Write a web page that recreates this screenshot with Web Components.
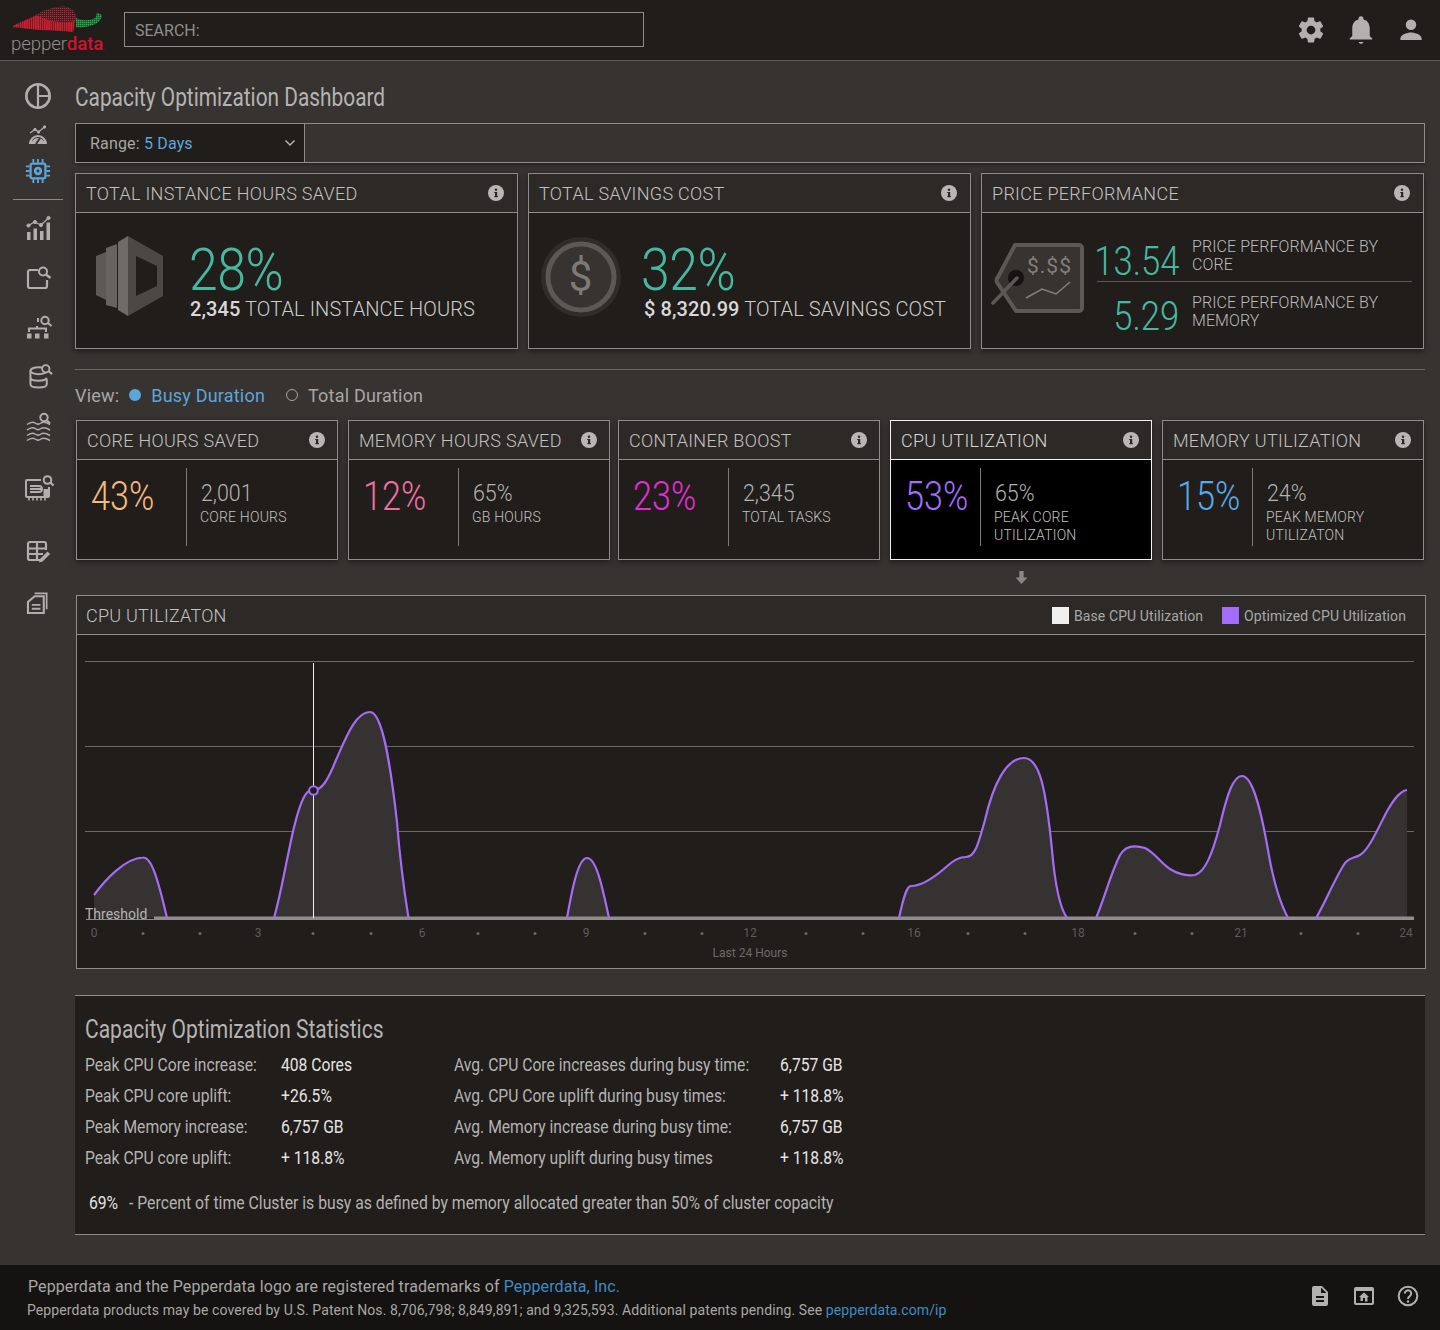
<!DOCTYPE html>
<html><head><meta charset="utf-8"><style>
html,body{margin:0;padding:0;background:#363331;}
body{width:1440px;height:1330px;overflow:hidden;font-family:Roboto,"Liberation Sans",sans-serif;color:#b5b3b1}
</style></head><body>
<pd-app></pd-app>
<script>
const INFO=`<svg width="16" height="16" viewBox="0 0 16 16"><circle cx="8" cy="8" r="8" fill="#b9b7b5"/><rect x="7" y="7" width="2.2" height="5" fill="#2b2826"/><rect x="6.2" y="7" width="2" height="1" fill="#2b2826"/><rect x="6.2" y="11.2" width="3.8" height="1" fill="#2b2826"/><circle cx="8" cy="4.8" r="1.2" fill="#2b2826"/></svg>`;
function el(name,html,css,after){customElements.define(name,class extends HTMLElement{connectedCallback(){if(this.shadowRoot)return;const r=this.attachShadow({mode:'open'});r.innerHTML='<style>'+css+'</style>'+(typeof html==='function'?html(this):html);after&&after(r,this)}})}

el('pd-topbar',`
<svg class="logo" width="106" height="34" viewBox="0 0 106 34"><defs>
<pattern id="s" width="2.200" height="3" patternUnits="userSpaceOnUse"><rect width="1.500" height="3" fill="#d21f30"/><rect x="1.500" width=".7" height="3" fill="#5a1d22"/></pattern>
<pattern id="d" width="2" height="2" patternUnits="userSpaceOnUse"><rect width="2" height="2" fill="#2a1d1d"/><rect width="1.200" height="1.200" fill="#c8273a"/></pattern>
<pattern id="g" width="2" height="2" patternUnits="userSpaceOnUse"><rect width="2" height="2" fill="#123b1d"/><rect width="1.500" height="1.500" fill="#28b04c"/></pattern></defs>
<path d="M13 26C22 21 32 18 40 13C48 9 58 6 66 7C72 8 76 12 75.500 18C75 24 74 29 73 32C62 31 52 30 40 30C30 29 20 28 13 27z" fill="url(#s)"/>
<path d="M36 15C44 10 56 6 66 7C72 8 76 12 75.500 21C62 24 48 21 36 15z" fill="url(#d)"/>
<path d="M76 18C82 21 90 21 95 18C97 17 96 14 97 12.500L102 15C102 20 97 24 90 26C86 27 80 28 76 27z" fill="url(#g)"/></svg>
<div class="brand"><span>pepper</span><b>data</b><i>.</i></div>
<div class="search">SEARCH:</div>
<div class="icons">
<svg width="30" height="30" viewBox="0 0 24 24" fill="#b3b1af"><path d="M19.4 13c.04-.33.06-.66.06-1s-.02-.67-.06-1l2.1-1.65c.2-.15.25-.42.12-.64l-2-3.46c-.12-.22-.38-.3-.6-.22l-2.5 1c-.52-.4-1.08-.73-1.7-.98l-.37-2.65A.49.49 0 0 0 14 2h-4c-.25 0-.46.18-.5.42l-.37 2.65c-.62.25-1.18.58-1.7.98l-2.5-1a.49.49 0 0 0-.6.22l-2 3.46c-.13.22-.07.49.12.64L4.56 11c-.04.33-.06.67-.06 1s.02.67.06 1l-2.1 1.65c-.2.15-.25.42-.12.64l2 3.46c.12.22.38.3.6.22l2.5-1c.52.4 1.08.73 1.7.98l.37 2.65c.04.24.25.42.5.42h4c.25 0 .46-.18.5-.42l.37-2.65c.62-.25 1.18-.58 1.7-.98l2.5 1c.22.08.48 0 .6-.22l2-3.46c.13-.22.07-.49-.12-.64L19.4 13zM12 15.5a3.5 3.5 0 1 1 0-7 3.5 3.5 0 0 1 0 7z"/></svg>
<svg width="30" height="30" viewBox="0 0 24 24" fill="#b3b1af"><path d="M12 23c1 0 1.8-.6 1.8-1.5h-3.600C10.200 22.400 11 23 12 23zM21 19.500v-.8l-2-2V10.500c0-3.500-1.800-6.300-5-7V3a2 2 0 0 0-4 0v.5c-3.200.7-5 3.500-5 7v6.200l-2 2v.8z"/></svg>
<svg width="30" height="30" viewBox="0 0 24 24" fill="#b3b1af"><path d="M12 12a4.200 4.200 0 1 0 0-8.400 4.200 4.200 0 0 0 0 8.400zm0 2c-3.300 0-8.500 1.700-8.500 5v1h17v-1c0-3.300-5.200-5-8.500-5z"/></svg>
</div>`,`
:host{display:flex;align-items:center;height:60px;background:#201d1b;border-bottom:1px solid #5e5c5a;box-sizing:content-box;position:relative}
.logo{position:absolute;left:0;top:0}
.brand{position:absolute;left:11px;top:33px;font:300 18.700px/22px Roboto,sans-serif;color:#918f8d;letter-spacing:-.15px}
.brand b{font-weight:500;color:#d2122e}.brand i{font-style:normal;color:#d2122e;font-size:8px}
.search{margin:-2px 0 0 124px;height:33px;border:1px solid #8e8c8a;font-size:16px;line-height:36px;padding-left:10px;box-sizing:content-box;width:508px;color:#908e8c}
.icons{margin-left:auto;display:flex;gap:20px;margin-right:14px}
`);

const G='#b1afad';
const NAV=[
[G,`<circle cx="14" cy="14" r="11.700" fill="none" stroke-width="2.600"/><path d="M14 3v22M14 14h11" fill="none" stroke-width="2.200"/>`,28,24,82,28],
[G,`<path d="M1 19a9 9 0 0 1 18 0z" fill="${G}" stroke="none"/><path d="M8 19l4-6" stroke="#363331" stroke-width="2"/><path d="M4.500 15.500a6.500 6.500 0 0 1 11 0" fill="none" stroke="#363331" stroke-width="1"/><path d="M2 8l5-3.500 3.500 2.500 6-5" fill="none" stroke-width="1.200"/><circle cx="7" cy="4.500" r="1.200" fill="${G}"/><circle cx="10.500" cy="7" r="1.200" fill="${G}"/><circle cx="16.500" cy="2" r="1.200" fill="${G}"/>`,20,28,125,20],
['#5da5db',`<rect x="6" y="6" width="16" height="16" rx="2" fill="none" stroke-width="2.400"/><circle cx="14" cy="14" r="3" fill="none" stroke-width="3"/><path d="M1 9h4M1 14h4M1 19h4M23 9h4M23 14h4M23 19h4M9 1v4M14 1v4M19 1v4M9 23v4M14 23v4M19 23v4" stroke-width="2" fill="none"/>`,26,25,158,28],
[G,`<path d="M1 24v-8h3.500v8zM7.500 24V12.500H11V24zM14 24V15h3.500v9zM20.500 24V6.500H24V24z" fill="${G}" stroke="none"/><path d="M2.500 9.500l6-3.500 6.500 3L22.500 2" fill="none" stroke-width="1.300"/><circle cx="9" cy="6" r="1.600" fill="${G}"/><circle cx="15" cy="9" r="1.600" fill="${G}"/><circle cx="22.500" cy="2" r="1.600" fill="${G}"/><circle cx="2.500" cy="9.500" r="1.600" fill="${G}"/>`,25,26,216,25],
[G,`<path d="M11 4H3a2 2 0 0 0-2 2v14a2 2 0 0 0 2 2h15a2 2 0 0 0 2-2v-6" fill="none" stroke-width="2.200"/><circle cx="16" cy="5.500" r="4" fill="none" stroke-width="2"/><path d="M19 8.500l4.500 3.500" stroke-width="2.400"/>`,24,27,266,24],
[G,`<circle cx="18" cy="5.500" r="3.700" fill="none" stroke-width="2"/><path d="M21 8l3.500 3" stroke-width="2.200"/><path d="M11 3v4M2 17v-3.500h17V17M10 13.500V11" fill="none" stroke-width="2"/><path d="M0 18.500h4.500v5H0zM8 18.500h4.500v5H8zM17 18.500h4.500v5H17z" fill="${G}" stroke="none"/>`,25,27,315,25],
[G,`<ellipse cx="10" cy="7" rx="8.500" ry="3.600" fill="none" stroke-width="2.100"/><path d="M1.500 7v14c0 2 3.500 3.400 8.500 3.400s8.500-1.400 8.500-3.400v-5M1.500 14c0 2 3.500 3.400 8.500 3.400s8-1 8.500-3" fill="none" stroke-width="2.100"/><circle cx="17.500" cy="5" r="3.800" fill="#363331" stroke-width="2"/><path d="M20.500 7.500l3.500 3" stroke-width="2.200"/>`,24,29,364,25],
[G,`<circle cx="18" cy="5.500" r="3.700" fill="none" stroke-width="2"/><path d="M21 8.500l3 3" stroke-width="2.200"/><path d="M1 12.500c4-3 6-3 8-1.500s4 1.500 6 0 5-1 9 1.500M1 18c4-3 6-3 8-1.500s4 1.500 6 0 5-1 9 1.500M1 23.500c4-3 6-3 8-1.500s4 1.500 6 0 5-1 9 1.500M1 28.500c4-3 6-3 8-1.500s4 1.500 6 0 5-1 9 1.500" fill="none" stroke-width="1.500"/>`,30,26,412,30],
[G,`<path d="M16 5H2a1 1 0 0 0-1 1v15a1 1 0 0 0 1 1h21a1 1 0 0 0 1-1V12" fill="none" stroke-width="2"/><path d="M4 22v3.500M8 22v3.500M12 22v3.500M16 22v3.500M20 22v3.500" stroke-width="1.600"/><path d="M5 11h9a3 3 0 0 1 0 6H5M5 14h12" fill="none" stroke-width="1.800"/><path d="M18.500 14h5.500v7h-5.500z" fill="${G}" stroke="none"/><circle cx="22.500" cy="5" r="3.800" fill="none" stroke-width="2"/><path d="M25.500 7.500l3 3" stroke-width="2.200"/>`,29,25,475,29],
[G,`<path d="M16 19H3a2 2 0 0 1-2-2V3a2 2 0 0 1 2-2h14a2 2 0 0 1 2 2v6" fill="none" stroke-width="2.200"/><path d="M1 7.500h18M10 1v18M1 13h15" fill="none" stroke-width="2.200"/><path d="M12 21.500l1-3.500 7.500-7.500 2.600 2.600-7.500 7.500z" fill="${G}" stroke="none"/>`,23,27,541,23],
[G,`<path d="M8 2.500h12.500V19" fill="none" stroke-width="1.800"/><path d="M8 5.500h9.500V23H1V11.500z" fill="none" stroke-width="2.200"/><path d="M5 14.500h9M5 18.500h9" stroke-width="2"/>`,23,27,591,24]
];
el('pd-sidebar',()=>{
 const ic=(n)=>`<svg style="top:${n[4]-61}px;left:${n[3]}px;stroke:${n[0]}" width="${n[2]}" height="${n[2]}" viewBox="0 0 ${n[5]} ${n[5]}">${n[1]}</svg>`;
 return NAV.map(ic).join('')+`<div class="sep"></div>`;
},`:host{display:block;width:75px;position:relative;flex:none}svg{position:absolute;overflow:visible}.sep{position:absolute;left:13px;top:138px;width:50px;height:1px;background:#8a8886}`);

el('pd-card',h=>`<header><span>${h.getAttribute('title')}</span><i>${INFO}</i></header><section><slot></slot></section>`,`
:host{display:flex;flex-direction:column;border:1px solid #8f8d8b;box-shadow:0 2px 6px rgba(0,0,0,.45);box-sizing:border-box;background:#201d1b}
header{height:38px;flex:none;display:flex;align-items:center;padding:0 var(--pr,13px) 0 10px;background:#2c2927;border-bottom:1px solid #8f8d8b;font-size:18px;font-weight:300;letter-spacing:.3px;color:#c4c2c0;justify-content:space-between}
i{display:flex}
section{flex:1;display:flex;min-height:0}
:host([active]){background:#000;border-color:#f0f0f0}
:host([active]) header{background:#2c2927;border-color:#f0f0f0;color:#d8d6d4}
`);

el('pd-stat',h=>`<slot name="ic"></slot><div class="t"><div class="p">${h.getAttribute('pct')}</div><div class="s"><b>${h.getAttribute('val')}</b> ${h.getAttribute('label')}</div></div>`,`
:host{display:flex;align-items:flex-start;flex:1}
.t{margin-left:var(--ml,26px);padding-top:31px}
.p{font:300 60px/52px Roboto,sans-serif;color:#46b8a0;letter-spacing:-.5px;transform:scaleX(.862);transform-origin:left;margin-left:var(--pl,-1px)}
.s{font-size:20px;font-weight:300;line-height:24px;color:#cfcdcb;white-space:nowrap;margin-top:1px;letter-spacing:.1px}
.s b{font-weight:500;color:#dad8d6}
`);

el('pd-tile',h=>`<div class="p" style="color:${h.getAttribute('color')}">${h.getAttribute('pct')}</div><div class="d"></div><div class="r"><div class="v">${h.getAttribute('val')}</div><div class="l">${h.getAttribute('label')}</div></div>`,`
:host{display:flex;flex:1;position:relative}
.p{width:var(--pw,95px);padding:14px 0 0 14px;flex:none;box-sizing:border-box;white-space:nowrap}
.p{font:300 40px/46px Roboto,sans-serif}
.d{width:1px;background:#7d7b79;margin:8px 0 13px;flex:none}
.r{padding:19px 0 0 13px;color:#b5b3b1}
.v{font:300 24px/28px Roboto,sans-serif;transform:scaleX(.89);transform-origin:left;white-space:nowrap;margin-left:1px}
.l{font-size:14px;line-height:18px;margin-top:1px;font-weight:300;letter-spacing:.2px;color:#c4c2c0}
`,(r)=>{r.querySelector('.p').innerHTML='<span style="display:inline-block;transform:scaleX(.855);transform-origin:left">'+r.querySelector('.p').textContent+'</span>'});

const CURVE=`M94 895C105 880 125 858 143 857.500C150 857 156 870 167 918 M274 918C285 880 292 820 304 797C308 790 310 790 314 790C322 790 328 780 336 760C345 740 355 712 370 712C382 712 390 760 397 822C400 860 404 890 408.500 918 M567 918C572 890 578 858 587 858C596 858 602 885 609 918 M899 918C904 895 907 886 911 886C920 886 930 881 945 868C955 859 960 857 966 857C975 857 978 845 985 820C993 785 1006 758 1024 758C1040 758 1046 790 1052 850C1055 885 1060 908 1067 918 M1096 918C1104 900 1110 875 1120 855C1125 846 1135 845 1145 848C1155 853 1160 862 1170 869C1178 874 1188 876 1195 875C1205 872 1212 855 1220 825C1227 795 1233 776 1242 776C1252 776 1260 805 1268 850C1273 880 1281 905 1288 918 M1316 918C1325 903 1335 878 1345 863C1350 857 1355 858 1360 855C1368 850 1375 835 1385 815C1392 802 1399 791 1407 790`;
const FILL=`M94 895C105 880 125 858 143 857.500C150 857 156 870 167 918H94Z M274 918C285 880 292 820 304 797C308 790 310 790 314 790C322 790 328 780 336 760C345 740 355 712 370 712C382 712 390 760 397 822C400 860 404 890 408.500 918Z M567 918C572 890 578 858 587 858C596 858 602 885 609 918Z M899 918C904 895 907 886 911 886C920 886 930 881 945 868C955 859 960 857 966 857C975 857 978 845 985 820C993 785 1006 758 1024 758C1040 758 1046 790 1052 850C1055 885 1060 908 1067 918Z M1096 918C1104 900 1110 875 1120 855C1125 846 1135 845 1145 848C1155 853 1160 862 1170 869C1178 874 1188 876 1195 875C1205 872 1212 855 1220 825C1227 795 1233 776 1242 776C1252 776 1260 805 1268 850C1273 880 1281 905 1288 918Z M1316 918C1325 903 1335 878 1345 863C1350 857 1355 858 1360 855C1368 850 1375 835 1385 815C1392 802 1399 791 1407 790V918Z`;
const TICKS=[[94,'0'],[258,'3'],[422,'6'],[586,'9'],[750,'12'],[914,'16'],[1078,'18'],[1241,'21'],[1406,'24']];
const DOTS=[143,200,313,371,478,535,645,702,806,863,968,1025,1135,1192,1301,1358];
el('pd-chart',`<header><span>CPU UTILIZATON</span><div class="lg"><i style="background:#efefef"></i><span>Base CPU Utilization</span><i style="background:#a56cfa;margin-left:19px"></i><span>Optimized CPU Utilization</span></div></header>
<svg width="1348" height="333" viewBox="77 635 1348 333">
<path d="M85 661.500H1414M85 746.500H1414M85 831.500H1414" stroke="#6a6866" fill="none"/>
<path d="${FILL}" fill="#363232"/>
<path d="M154 918H1414" stroke="#8f8d8b" stroke-width="3"/><path d="M86 919.500H1414" stroke="#8f8d8b" />
<path d="${CURVE}" stroke="#a56cf5" stroke-width="2.200" fill="none"/>
<path d="M313.500 663V918" stroke="#f0f0f0"/>
<circle cx="313.500" cy="790.500" r="4.300" fill="#201d1b" stroke="#a56cf5" stroke-width="2"/>
<text x="85" y="919" font-size="14" fill="#b5b3b1" font-family="Roboto">Threshold</text>
${TICKS.map(t=>`<text x="${t[0]}" y="937" font-size="12" fill="#5e5c5a" text-anchor="middle" font-family="Roboto">${t[1]}</text>`).join('')}
${DOTS.map(x=>`<circle cx="${x}" cy="933.500" r="1.500" fill="#6a6866"/>`).join('')}
<text x="750" y="957" font-size="12" fill="#6d6b69" text-anchor="middle" font-family="Roboto">Last 24 Hours</text>
</svg>`,`
:host{display:block;border:1px solid #8f8d8b;width:1350px;height:374px;box-sizing:border-box;background:#201d1b;margin-left:1px}
header{height:38px;display:flex;justify-content:space-between;align-items:center;background:#2c2927;border-bottom:1px solid #8f8d8b;padding:0 19px 0 9px;font-size:18px;font-weight:300;letter-spacing:.25px;color:#c4c2c0;box-sizing:content-box}
.lg{display:flex;align-items:center;font-size:14px;font-weight:400;letter-spacing:.1px;color:#a9a7a5;padding-top:1px}
.lg i{width:17px;height:17px;display:block;margin:-1px 5px 0 0}
svg{display:block}
`);

const ROWS=[['Peak CPU Core increase:','408 Cores','Avg. CPU Core increases during busy time:','6,757 GB'],['Peak CPU core uplift:','+26.5%','Avg. CPU Core uplift during busy times:','+ 118.8%'],['Peak Memory increase:','6,757 GB','Avg. Memory increase during busy time:','6,757 GB'],['Peak CPU core uplift:','+ 118.8%','Avg. Memory uplift during busy times','+ 118.8%']];
el('pd-stats',`<h2><span>Capacity Optimization Statistics</span></h2>
<div class="g">${ROWS.map(r=>`<span class="k w1"><u>${r[0]}</u></span><span class="v w2"><u>${r[1]}</u></span><span class="k w3"><u>${r[2]}</u></span><span class="v"><u>${r[3]}</u></span>`).join('')}</div>
<p><span class="n"><u>69%</u></span><span class="pp"><u>- Percent of time Cluster is busy as defined by memory allocated greater than 50% of cluster copacity</u></span></p>`,`
:host{display:block;background:#201d1b;border-top:1px solid #8f8d8b;border-bottom:1px solid #8f8d8b;height:240px;box-sizing:border-box;padding:0 10px;width:1350px}
u{text-decoration:none;display:inline-block;transform:scaleX(.87);transform-origin:left;white-space:nowrap}
.pp u{transform:scaleX(.876)}
h2{margin:0;padding-top:19px;font:400 25px/30px Roboto,sans-serif;color:#b5b3b1;white-space:nowrap}
h2 span{display:inline-block;transform:scaleX(.841);transform-origin:left}
.g{display:grid;grid-template-columns:196px 173px 326px 1fr;grid-auto-rows:31px;margin-top:4px;font-size:18px;line-height:31px}
.k{color:#b5b3b1}.v{color:#e6e4e2}
p{margin:15px 0 0 4px;font-size:18px;line-height:30px;display:flex;white-space:nowrap}
.n{color:#e6e4e2;width:40px}.pp{color:#b5b3b1}
`);

el('pd-footer',`<div class="a">Pepperdata and the Pepperdata logo are registered trademarks of <a>Pepperdata, Inc.</a></div><div class="b">Pepperdata products may be covered by U.S. Patent Nos. 8,706,798; 8,849,891; and 9,325,593. Additional patents pending. See <a>pepperdata.com/ip</a></div>
<div class="ic">
<svg width="24" height="24" viewBox="0 0 24 24" fill="#b3b1af"><path d="M14 2H6a2 2 0 0 0-2 2v16a2 2 0 0 0 2 2h12a2 2 0 0 0 2-2V8zm-1 7V3.500L18.500 9zM8 12h8v2H8zm0 4h8v2H8z" fill-rule="evenodd"/></svg>
<svg width="24" height="24" viewBox="0 0 24 24" fill="#b3b1af"><path d="M4 3h16a2 2 0 0 1 2 2v14a2 2 0 0 1-2 2H4a2 2 0 0 1-2-2V5a2 2 0 0 1 2-2zm0 4v12h16V7zm8 1.500l5 4.500h-1.500v4.500H13V14h-2v3H8.500v-4H7z" fill-rule="evenodd"/></svg>
<svg width="24" height="24" viewBox="0 0 24 24" fill="none" stroke="#b3b1af" stroke-width="2"><circle cx="12" cy="12" r="9.300"/><path d="M8.800 9.500a3.200 3.200 0 1 1 5 2.700c-1.200.8-1.800 1.300-1.800 2.800" stroke-width="2"/><circle cx="12" cy="17.500" r="1.200" fill="#b3b1af" stroke="none"/></svg>
</div>`,`
:host{display:block;height:65px;background:#151311;position:relative;box-sizing:border-box;padding:12px 0 0 28px;font-family:Roboto,sans-serif}
.a{font-size:16px;line-height:20px;color:#a9a7a5;letter-spacing:.1px}
.b{font-size:14px;line-height:18px;margin-top:4px;margin-left:-1px;color:#a9a7a5;letter-spacing:.095px}
a{color:#3e8bc4}
.ic{position:absolute;right:20px;top:19px;display:flex;gap:20px}
`);

el('pd-app',`
<pd-topbar></pd-topbar>
<div class="main"><pd-sidebar></pd-sidebar>
<div class="c">
<h1><span>Capacity Optimization Dashboard</span></h1>
<div class="range"><div class="sel">Range: <em>5 Days</em><svg width="12" height="8" viewBox="0 0 12 8" fill="none" stroke="#b5b3b1" stroke-width="1.500"><path d="M1.500 1.500l4.500 4.500 4.500-4.500"/></svg></div></div>
<div class="top">
<pd-card title="TOTAL INSTANCE HOURS SAVED"><pd-stat pct="28%" val="2,345" label="TOTAL INSTANCE HOURS">
<svg slot="ic" width="68" height="81" viewBox="0 0 68 81" style="margin:23px 0 0 20px"><path d="M0 20l10-4v48L0 59z" fill="#5c5956"/><path d="M10 12l11-4v64l-11-3z" fill="#666360"/><path d="M22 6L32 0v80L22 74z" fill="#6e6b68"/><path d="M32 0l35 20v40L32 80zM40 20v40l21-10V30z" fill="#4b4845" fill-rule="evenodd"/></svg>
</pd-stat></pd-card>
<pd-card title="TOTAL SAVINGS COST"><pd-stat pct="32%" val="$ 8,320.99" label="TOTAL SAVINGS COST" style="--ml:22px;--pl:-3px">
<svg slot="ic" width="82" height="82" viewBox="0 0 82 82" style="margin:23px 0 0 11px"><circle cx="41" cy="41" r="40" fill="#2f2c2a"/><circle cx="41" cy="41" r="33" fill="#363331" stroke="#5b5855" stroke-width="5"/><text x="40.500" y="55" font-size="42" font-weight="400" text-anchor="middle" fill="#7d7a77" font-family="Roboto">$</text></svg>
</pd-stat></pd-card>
<pd-card title="PRICE PERFORMANCE"><pd-price></pd-price></pd-card>
</div>
<div class="hr"></div>
<div class="view">View:<i class="on"></i><em>Busy Duration</em><i class="off"></i><span>Total Duration</span></div>
<div class="tiles">
<pd-card style="width:262px;--pr:12px" title="CORE HOURS SAVED"><pd-tile color="#f4b97c" pct="43%" val="2,001" label="CORE HOURS" style="--pw:109px"></pd-tile></pd-card>
<pd-card style="width:262px;--pr:12px" title="MEMORY HOURS SAVED"><pd-tile color="#ef6fa0" pct="12%" val="65%" label="GB HOURS" style="--pw:109px"></pd-tile></pd-card>
<pd-card style="width:262px;margin-left:-2px;--pr:12px" title="CONTAINER BOOST"><pd-tile color="#e22fd1" pct="23%" val="2,345" label="TOTAL TASKS" style="--pw:109px"></pd-tile></pd-card>
<pd-card active style="width:262px;--pr:12px" title="CPU UTILIZATION"><pd-tile color="#a56cfa" pct="53%" val="65%" label="PEAK CORE UTILIZATION" style="--pw:89px"></pd-tile></pd-card>
<pd-card style="width:262px;--pr:12px" title="MEMORY UTILIZATION"><pd-tile color="#59a9e6" pct="15%" val="24%" label="PEAK MEMORY UTILIZATON" style="--pw:89px"></pd-tile></pd-card>
</div>
<div class="arrow"><svg width="13" height="13" viewBox="0 0 12 12" fill="#8a8886"><path d="M4 0h4v6h3.500L6 12 .5 6H4z"/></svg></div>
<pd-chart></pd-chart>
<pd-stats></pd-stats>
</div></div>
<pd-footer></pd-footer>`,`
:host{display:flex;flex-direction:column;height:1330px;background:#363331}
.main{display:flex;flex:1;min-height:0}
.c{flex:none;width:1365px}
h1{margin:0;padding-top:20px;height:42px;box-sizing:content-box;font:400 26px/32px Roboto,sans-serif;color:#b5b3b1;white-space:nowrap}
h1 span{display:inline-block;transform:scaleX(.802);transform-origin:left}
.range{width:1350px;height:40px;border:1px solid #8f8d8b;box-sizing:border-box;box-shadow:0 2px 4px rgba(0,0,0,.3)}
.sel{width:229px;height:38px;background:#201d1b;border-right:1px solid #8f8d8b;display:flex;align-items:center;padding-left:14px;box-sizing:border-box;font-size:16px;letter-spacing:.17px;color:#a9a7a5;white-space:pre}
.sel em{font-style:normal;color:#5da5db}
.sel svg{margin-left:auto;margin-right:8px}
.top{display:flex;gap:10px;margin-top:10px;height:176px}
.top pd-card{width:443px}
.hr{height:1px;background:#6a6866;margin-top:20px;width:1350px}
.view{display:flex;align-items:center;height:50px;font-size:18px;letter-spacing:.2px;color:#a9a7a5}
.view i{width:12px;height:12px;border-radius:50%;display:block}
.view .on{background:#5da5db;margin:0 10px 0 10px}
.view em{font-style:normal;color:#5da5db}
.view .off{box-sizing:border-box;border:1.500px solid #a9a7a5;margin:0 10px 0 21px}
.tiles{display:flex;gap:10px;height:140px;margin-left:1px}
.arrow{height:35px;display:flex;justify-content:flex-end;padding:11px 412px 0 0;box-sizing:border-box;}
pd-stats{margin-top:26px}
`);

el('pd-price',`<svg class="tag" width="94" height="72" viewBox="0 0 94 72"><path d="M24 2h64a3 3 0 0 1 3 3v60a3 3 0 0 1-3 3H25L7 41a5 5 0 0 1 0-7z" fill="#363331" stroke="#5b5855" stroke-width="4" stroke-linejoin="round"/><circle cx="25" cy="35" r="8" fill="#151311"/><path d="M26 35L2 60" stroke="#5b5855" stroke-width="3.500" stroke-linecap="round"/><text x="36" y="30" font-size="21" fill="#827f7c" font-family="Roboto" letter-spacing="1">$.$$</text><path d="M35 55l16-9 14 5 14-12" fill="none" stroke="#827f7c" stroke-width="1.500"/></svg>
<div class="rows"><div class="row"><b><u>13.54</u></b><span>PRICE PERFORMANCE BY CORE</span></div><div class="row r2"><b><u>5.29</u></b><span>PRICE PERFORMANCE BY MEMORY</span></div></div>`,`
:host{display:flex;flex:1;position:relative}
.tag{position:absolute;left:9px;top:30px}
.rows{position:absolute;left:115px;top:22px;width:315px}
.row{display:flex;height:46px;align-items:flex-start;border-bottom:1px solid #5a5856}
.r2{border:none;padding-top:10px;height:46px}
b{width:82px;flex:none;display:flex;justify-content:flex-end;margin-top:4px}
.r2 b{margin-top:2px}
u{text-decoration:none;font:300 40px/46px Roboto,sans-serif;color:#46b8a0;flex:none;transform:scaleX(.865);transform-origin:right;white-space:nowrap}
span{margin-left:13px;font-size:16px;font-weight:300;line-height:18px;letter-spacing:.08px;color:#bdbbb9;width:215px;padding-top:3px}
.r2 span{padding-top:2px}
`);
</script></body></html>
